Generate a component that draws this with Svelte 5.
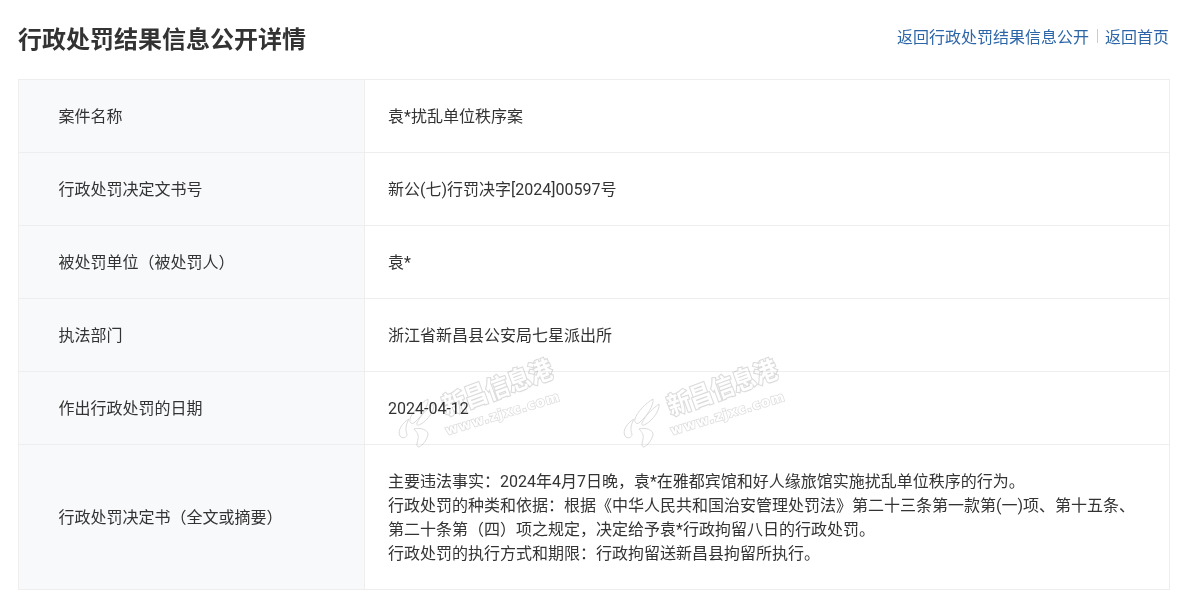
<script>
  const rows = [
    { label: '案件名称', value: ['袁*扰乱单位秩序案'] },
    { label: '行政处罚决定文书号', value: ['新公(七)行罚决字[2024]00597号'] },
    { label: '被处罚单位\uFF08被处罚人\uFF09', value: ['袁*'] },
    { label: '执法部门', value: ['浙江省新昌县公安局七星派出所'] },
    { label: '作出行政处罚的日期', value: ['2024-04-12'] },
    {
      label: '行政处罚决定书\uFF08全文或摘要\uFF09',
      value: [
        '主要违法事实\uFF1A2024年4月7日晚\uFF0C袁*在雅都宾馆和好人缘旅馆实施扰乱单位秩序的行为。',
        '行政处罚的种类和依据\uFF1A根据《中华人民共和国治安管理处罚法》第二十三条第一款第(一)项、第十五条、',
        '第二十条第\uFF08四\uFF09项之规定\uFF0C决定给予袁*行政拘留八日的行政处罚。',
        '行政处罚的执行方式和期限\uFF1A行政拘留送新昌县拘留所执行。'
      ]
    }
  ]

  // watermark stamped over the table
  const marks = [396, 621]
</script>

<div class="page">
  <header class="top">
    <h1>行政处罚结果信息公开详情</h1>
    <nav>
      <a href="#list">返回行政处罚结果信息公开</a>
      <span class="sep"></span>
      <a href="#home">返回首页</a>
    </nav>
  </header>

  <table>
    <tbody>
      {#each rows as row}
        <tr>
          <th>{row.label}</th>
          <td>
            {#each row.value as line}
              <div>{line}</div>
            {/each}
          </td>
        </tr>
      {/each}
    </tbody>
  </table>

  {#each marks as left}
    <div class="mark" style="left: {left}px">
      <svg class="logo" width="42" height="54" viewBox="0 0 42 54">
        <path d="M32 3 C33 9 26 20 19 26 C16 29 13 27 14 23 C16 16 25 7 32 3 Z" />
        <path d="M38 8 C39 14 32 24 25 28 C22 30 20 29 21 27 C24 20 31 13 38 8 Z" />
        <path d="M13 23 C6 27 1 35 4 40 C6 43 11 42 11 38 C9 34 10 28 13 23 Z" />
        <path d="M18 33 C24 31 33 34 32 39 C30 45 27 49 23 51 C20 51 21 47 22 43 C23 39 21 36 18 33 Z" />
      </svg>
      <div class="cn">新昌信息港</div>
      <div class="url">www.zjxc.com</div>
    </div>
  {/each}
</div>

<style>
  :global(body) {
    margin: 0;
    background: #fff;
  }

  .page {
    position: relative;
    height: 600px;
    overflow: hidden;
    padding: 0 14px 0 18px;
    font-family: Roboto, "Noto Sans CJK SC", sans-serif;
    color: #333;
  }

  .top {
    display: flex;
    justify-content: space-between;
    align-items: center;
    height: 79px;
    padding-bottom: 5px;
    box-sizing: border-box;
  }

  h1 {
    margin: 0;
    font-size: 24px;
    font-weight: 700;
    color: #333;
  }

  nav {
    display: flex;
    align-items: center;
    font-size: 16px;
    margin: -3px 1px 0 0;
  }

  nav a {
    color: #2d66a8;
    text-decoration: none;
  }

  .sep {
    width: 1px;
    height: 14px;
    margin: 0 7px 0 8px;
    background: #ccc;
  }

  table {
    width: 100%;
    border-collapse: collapse;
    table-layout: fixed;
    font-size: 16px;
  }

  th,
  td {
    border: 1px solid #eee;
    height: 72px;
    padding: 2px 0 0;
    box-sizing: border-box;
    font-weight: 400;
    text-align: left;
    line-height: 24px;
  }

  th {
    width: 346px;
    padding-left: 39.5px;
    background: #f8f9fb;
  }

  td {
    padding-left: 23px;
  }

  tr {
    height: 73px;
  }

  tr:last-child {
    height: 145px;
  }

  .mark {
    position: absolute;
    top: 362px;
    width: 170px;
    height: 90px;
    pointer-events: none;
    mix-blend-mode: multiply;
  }

  .logo {
    position: absolute;
    left: 0;
    top: 34px;
    fill: #fff;
    stroke: #dadada;
    stroke-width: 1;
  }

  .cn,
  .url {
    position: absolute;
    white-space: nowrap;
    transform-origin: left bottom;
    color: #fff;
    paint-order: stroke fill;
  }

  .cn {
    left: 52px;
    top: 30px;
    font-size: 23px;
    line-height: 28px;
    font-weight: 700;
    transform: rotate(-20deg) scaleY(1.1);
    font-family: "Noto Sans CJK SC", sans-serif;
    -webkit-text-stroke: 2.2px #dcdcdc;
  }

  .url {
    left: 52px;
    top: 60px;
    font-size: 13.5px;
    line-height: 16px;
    letter-spacing: 1px;
    font-weight: 700;
    transform: rotate(-17deg);
    font-family: "DejaVu Sans", sans-serif;
    -webkit-text-stroke: 1.5px #dcdcdc;
  }
</style>
